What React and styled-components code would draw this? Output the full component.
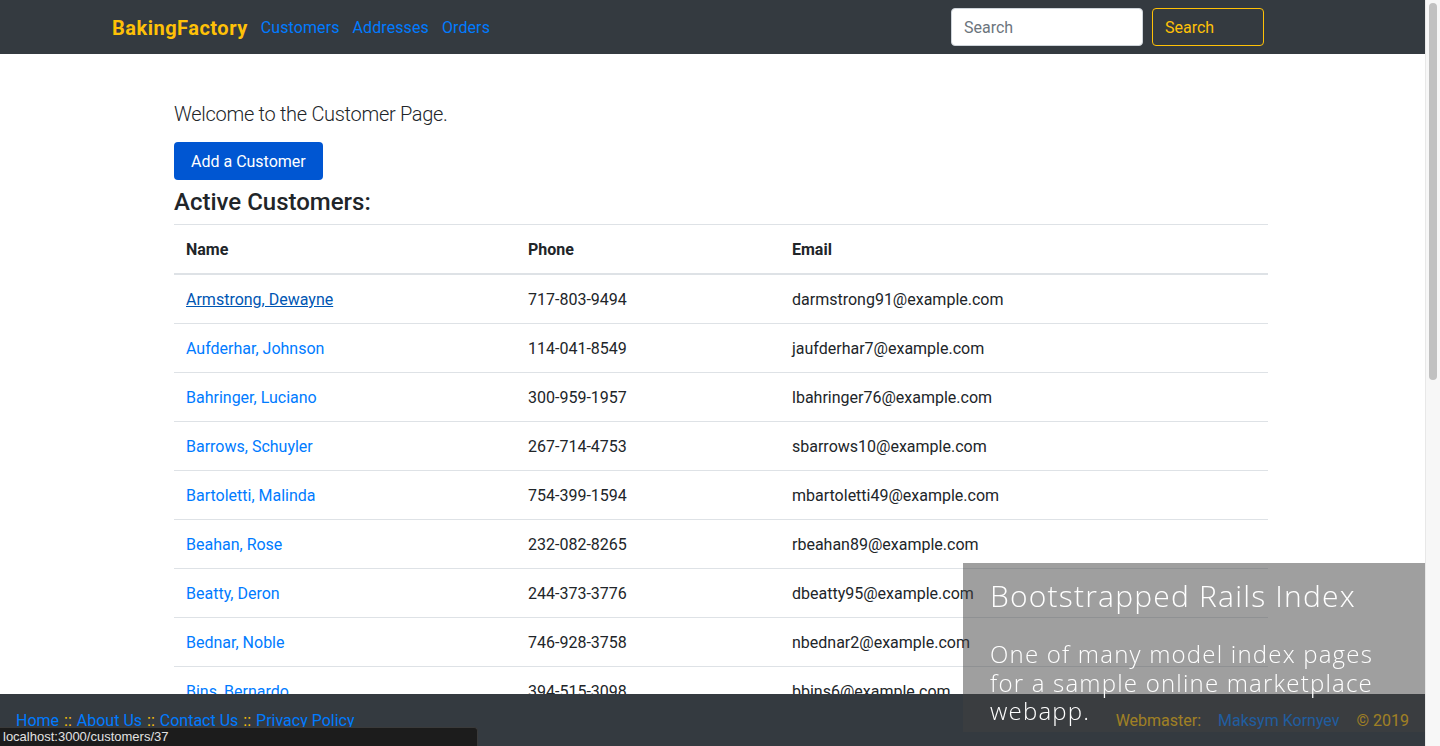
import React from "react";
import styled, { createGlobalStyle } from "styled-components";

const Global = createGlobalStyle`
  html::-webkit-scrollbar { display: none; }
  body {
    margin: 0;
    font-family: Roboto, "Liberation Sans", sans-serif;
    font-size: 16px;
    line-height: 24px;
    color: #212529;
    background: #fff;
  }
  * { box-sizing: border-box; }
`;

const NavBar = styled.nav`
  height: 54px;
  background: #343a40;
  display: flex;
  align-items: center;
  justify-content: space-between;
  padding: 0 176px 0 112px;
`;

const NavLeft = styled.div`
  display: flex;
  align-items: center;
  gap: 13px;
  padding-top: 2px;
`;

const Brand = styled.a`
  color: #ffc107;
  font-weight: 700;
  font-size: 20px;
  letter-spacing: 0.5px;
  text-decoration: none;
`;

const NavLink = styled.a`
  color: #007bff;
  font-size: 16px;
  letter-spacing: 0.1px;
  text-decoration: none;
`;

const SearchForm = styled.form`
  display: flex;
  align-items: center;
  gap: 9px;
`;

const SearchInput = styled.input`
  width: 192px;
  height: 38px;
  border: 1px solid #ced4da;
  border-radius: 4px;
  padding: 1px 12px 0;
  font-family: inherit;
  font-size: 16px;
  &::placeholder { color: #6c757d; }
`;

const OutlineButton = styled.button`
  width: 112px;
  height: 38px;
  border: 1px solid #ffc107;
  border-radius: 4px;
  background: transparent;
  color: #ffc107;
  font-family: inherit;
  font-size: 16px;
  text-align: left;
  padding: 1px 12px 0;
`;

const Main = styled.main`
  width: 1094px;
  margin-left: 174px;
  padding: 45px 0 110px;
`;

const Lead = styled.p`
  font-size: 20px;
  font-weight: 300;
  line-height: 30px;
  letter-spacing: -0.3px;
  margin: 0 0 13px;
`;

const PrimaryButton = styled.button`
  height: 38px;
  padding: 1px 17px 0;
  background: #0056d2;
  color: #fff;
  border: none;
  border-radius: 4px;
  font-family: inherit;
  font-size: 16px;
  margin-bottom: 7px;
  display: block;
`;

const Heading = styled.h4`
  font-size: 24px;
  font-weight: 500;
  line-height: 29px;
  padding-top: 1px;
  margin: 0 0 7px;
`;

const Table = styled.table`
  width: 100%;
  border-collapse: collapse;
  table-layout: fixed;
`;

const Th = styled.th`
  text-align: left;
  font-weight: 700;
  padding: 13px 12px 11px;
  border-top: 1px solid #dee2e6;
  border-bottom: 2px solid #dee2e6;
  width: ${(p) => p.$w || "auto"};
`;

const Td = styled.td`
  padding: 13px 12px 11px;
  border-top: 1px solid #dee2e6;
  white-space: nowrap;
`;

const CustomerLink = styled.a`
  color: ${(p) => (p.$hover ? "#0056b3" : "#007bff")};
  text-decoration: ${(p) => (p.$hover ? "underline" : "none")};
`;

const Footer = styled.footer`
  position: fixed;
  left: 0;
  right: 15px;
  bottom: 0;
  height: 52px;
  background: #343a40;
  display: flex;
  align-items: center;
  justify-content: space-between;
  padding: 2px 16px 0;
`;

const FooterLinks = styled.div`
  display: flex;
  gap: 5px;
`;

const FooterLink = styled.a`
  color: #007bff;
  text-decoration: none;
`;

const Sep = styled.span`
  color: #ffc107;
`;

const FooterRight = styled.div`
  display: flex;
  gap: 17px;
  color: #ffc107;
`;

const Overlay = styled.aside`
  position: fixed;
  right: 14px;
  bottom: 14px;
  width: 463px;
  height: 169px;
  background: rgba(64, 64, 64, 0.5);
  color: #fff;
  padding: 15px 20px 0 27px;
  font-family: "Open Sans", sans-serif;
  font-weight: 300;
  letter-spacing: 1.2px;
`;

const OverlayTitle = styled.div`
  font-size: 30px;
  line-height: 36px;
  margin-bottom: 26px;
`;

const OverlayText = styled.div`
  font-size: 24px;
  line-height: 28.5px;
`;

const StatusBar = styled.div`
  position: fixed;
  left: 0;
  bottom: 0;
  width: 478px;
  height: 19px;
  background: #1c1c1c;
  border-top-right-radius: 4px;
  border-top: 1px solid #3a3a3a;
  border-right: 1px solid #3a3a3a;
  color: #e2e2e2;
  font-family: "Liberation Sans", sans-serif;
  font-size: 13px;
  line-height: 18px;
  padding-left: 3px;
`;

const ScrollTrack = styled.div`
  position: fixed;
  top: 0;
  right: 0;
  bottom: 0;
  width: 15px;
  background: #f7f7f7;
  border-left: 1px solid #e8e8e8;
  padding: 3px 3px 0 3px;
`;

const ScrollThumb = styled.div`
  width: 8px;
  height: 377px;
  background: #c1c1c1;
  border-radius: 4px;
`;

const customers = [
  ["Armstrong, Dewayne", "717-803-9494", "darmstrong91@example.com"],
  ["Aufderhar, Johnson", "114-041-8549", "jaufderhar7@example.com"],
  ["Bahringer, Luciano", "300-959-1957", "lbahringer76@example.com"],
  ["Barrows, Schuyler", "267-714-4753", "sbarrows10@example.com"],
  ["Bartoletti, Malinda", "754-399-1594", "mbartoletti49@example.com"],
  ["Beahan, Rose", "232-082-8265", "rbeahan89@example.com"],
  ["Beatty, Deron", "244-373-3776", "dbeatty95@example.com"],
  ["Bednar, Noble", "746-928-3758", "nbednar2@example.com"],
  ["Bins, Bernardo", "394-515-3098", "bbins6@example.com"],
  ["Bode, Lavonne", "512-330-7741", "lbode33@example.com"],
  ["Bogan, Emmett", "628-190-4402", "ebogan58@example.com"],
  ["Boyer, Kiana", "871-462-0937", "kboyer14@example.com"],
  ["Braun, Tobias", "305-288-6615", "tbraun81@example.com"],
  ["Brekke, Alda", "419-753-2260", "abrekke27@example.com"],
  ["Brown, Garfield", "203-946-5581", "gbrown63@example.com"],
  ["Buckridge, Nia", "760-115-8830", "nbuckridge40@example.com"],
  ["Carroll, Jude", "482-607-3317", "jcarroll18@example.com"],
  ["Cassin, Maryam", "915-224-7096", "mcassin72@example.com"],
  ["Champlin, Ross", "338-871-4452", "rchamplin5@example.com"],
  ["Christiansen, Ida", "647-309-1188", "ichristiansen90@example.com"],
  ["Collins, Wilber", "559-483-2704", "wcollins36@example.com"],
  ["Conn, Shana", "801-662-9541", "sconn24@example.com"],
];

export default function App() {
  return (
    <>
      <Global />
      <NavBar>
        <NavLeft>
          <Brand href="#">BakingFactory</Brand>
          <NavLink href="#">Customers</NavLink>
          <NavLink href="#">Addresses</NavLink>
          <NavLink href="#">Orders</NavLink>
        </NavLeft>
        <SearchForm onSubmit={(e) => e.preventDefault()}>
          <SearchInput placeholder="Search" />
          <OutlineButton type="submit">Search</OutlineButton>
        </SearchForm>
      </NavBar>
      <Main>
        <Lead>Welcome to the Customer Page.</Lead>
        <PrimaryButton>Add a Customer</PrimaryButton>
        <Heading>Active Customers:</Heading>
        <Table>
          <thead>
            <tr>
              <Th $w="342px">Name</Th>
              <Th $w="264px">Phone</Th>
              <Th>Email</Th>
            </tr>
          </thead>
          <tbody>
            {customers.map(([name, phone, email], i) => (
              <tr key={name}>
                <Td>
                  <CustomerLink href="#" $hover={i === 0}>
                    {name}
                  </CustomerLink>
                </Td>
                <Td>{phone}</Td>
                <Td>{email}</Td>
              </tr>
            ))}
          </tbody>
        </Table>
      </Main>
      <Footer>
        <FooterLinks>
          <FooterLink href="#">Home</FooterLink>
          <Sep>::</Sep>
          <FooterLink href="#">About Us</FooterLink>
          <Sep>::</Sep>
          <FooterLink href="#">Contact Us</FooterLink>
          <Sep>::</Sep>
          <FooterLink href="#">Privacy Policy</FooterLink>
        </FooterLinks>
        <FooterRight>
          <span>Webmaster:</span>
          <FooterLink href="#">Maksym Kornyev</FooterLink>
          <span>© 2019</span>
        </FooterRight>
      </Footer>
      <Overlay>
        <OverlayTitle>Bootstrapped Rails Index</OverlayTitle>
        <OverlayText>
          One of many model index pages
          <br />
          for a sample online marketplace
          <br />
          webapp.
        </OverlayText>
      </Overlay>
      <StatusBar>localhost:3000/customers/37</StatusBar>
      <ScrollTrack>
        <ScrollThumb />
      </ScrollTrack>
    </>
  );
}
